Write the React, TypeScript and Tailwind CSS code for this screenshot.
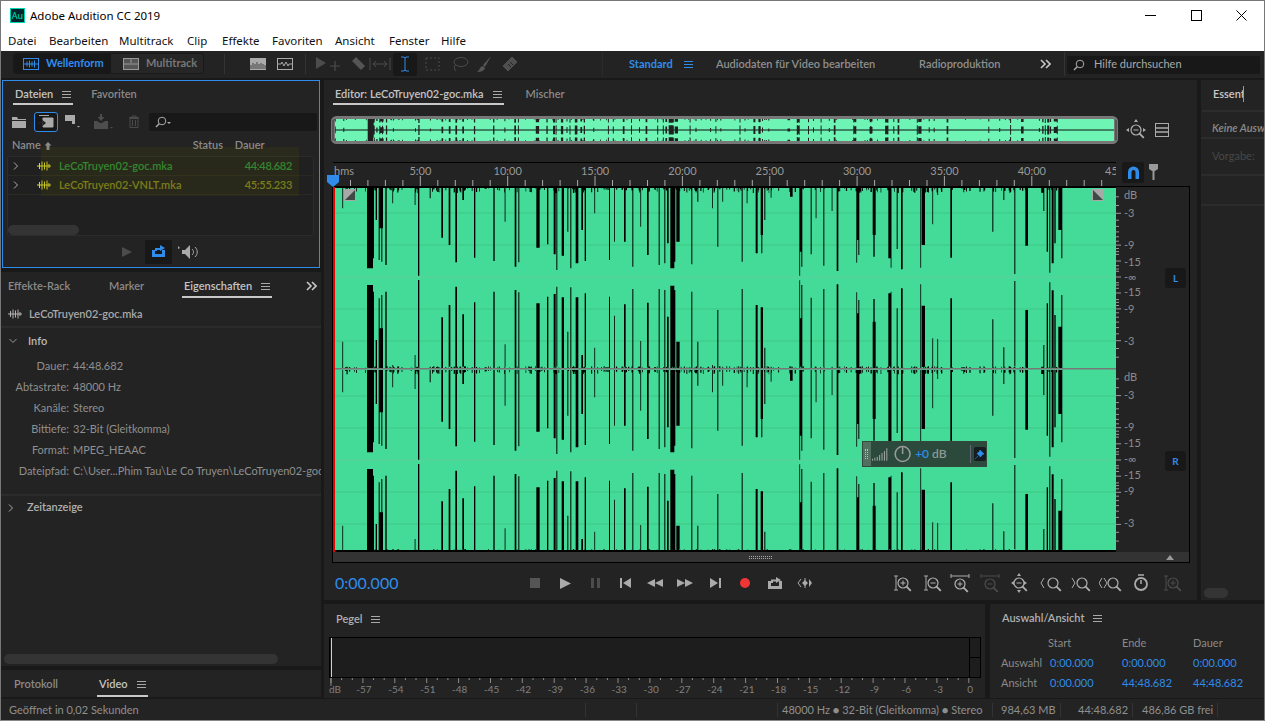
import React from "react";

type S = [number, number, number, number?];
const A: S[] = [[0,5,160,390],[28,2,70,470],[102,18,250,300],[118,5,220,320],[128,4,105,465],[137,3,225,340],[140,10,130,430],[145,3,230,330],[157,4,240,320],[178,2,55,540],[245,2,60,510],[255,4,272,285],[290,3,40,545],[325,5,158,397],[347,5,180,360],[367,5,232,305],[388,5,45,388],[423,4,218,352],[481,4,228,320],[515,2,110,478],[545,5,245,315],[556,3,232,322],[610,10,188,355],[642,4,178,335],[662,6,208,327],[670,3,255,305],[686,7,212,337],[703,3,140,440],[712,3,250,307],[728,8,235,337],[745,5,135,510],[755,4,228,325],[784,2,85,488],[828,3,225,335],[843,2,170,392],[873,5,170,358],[898,3,245,312],[922,2,125,468],[942,5,210,353],[977,3,240,312],[994,3,235,315],[1002,5,175,395],[1012,12,250,302],[1022,5,230,315],[1030,10,170,470],[1075,3,238,320],[1093,3,50,470],[1153,3,185,375],[1137,2,70,540]];
const B: S[] = [[7,2,50,545],[65,3,230,312],[80,2,55,545],[107,6,205,360],[122,7,150,367],[124,3,205,400],[133,3,105,488],[152,2,38,545],[210,8,35,545],[238,8,200,400],[238,2,272,286],[244,3,245,300],[272,3,208,338],[287,2,100,545],[310,3,242,312],[335,2,78,545],[350,5,258,298],[410,6,165,385],[409,2,233,322],[415,3,210,345],[458,9,150,410],[460,4,215,342],[505,7,220,325],[512,2,248,320],[530,3,192,370],[543,5,253,310],[601,2,248,298],[605,10,180,362],[637,2,118,460],[652,2,30,462],[691,5,218,340],[817,3,140,403],[850,3,45,487],[883,3,267,288],[916,8,182,375],[970,3,78,480],[980,4,200,355],[988,3,263,292],[995,6,235,316],[1003,4,175,390],[1015,10,135,425],[1024,3,220,330]];
const spikes: { x: number; w: number; t: number; b: number }[] = [
  ...A.map(([X, W, T, Bt]) => ({ x: X / 3, w: W / 3, t: T / 3 - 2, b: (Bt ?? 540) / 3 - 2 })),
  ...B.map(([X, W, T, Bt]) => ({ x: (X + 1161) / 3, w: W / 3, t: T / 3 - 2, b: (Bt ?? 540) / 3 - 2 })),
];
const rnd = (i: number) => {
  const v = Math.sin(i * 12.9898) * 43758.5453;
  return v - Math.floor(v);
};
let wave = "";
for (const s of spikes) {
  const w = Math.max(s.w, 0.8).toFixed(2);
  const x = s.x.toFixed(2);
  const rect = (y0: number, y1: number) => `M${x} ${y0.toFixed(1)}h${w}V${y1.toFixed(1)}h-${w}z`;
  wave += rect(0, s.t) + rect(s.b, 181) + rect(183, 183 + s.t + 1) + rect(183 + s.b + 1, 365);
}
for (let i = 0; i < 250; i++) {
  const x = rnd(i) * 729;
  const h = 1 + rnd(i + 500) * 5;
  const h2 = 1 + rnd(i + 900) * 5;
  const w = 0.5 + rnd(i + 200) * 0.8;
  wave += `M${x.toFixed(1)} 0h${w.toFixed(1)}v${h.toFixed(1)}h-${w.toFixed(1)}z`;
  wave += `M${x.toFixed(1)} 181h${w.toFixed(1)}v-${(h2 * 0.3).toFixed(1)}h-${w.toFixed(1)}z`;
  wave += `M${x.toFixed(1)} 183h${w.toFixed(1)}v${(h * 0.7).toFixed(1)}h-${w.toFixed(1)}z`;
  wave += `M${x.toFixed(1)} 365h${w.toFixed(1)}v-${(h2 * 0.5).toFixed(1)}h-${w.toFixed(1)}z`;
}
let over = "";
for (const s of spikes) {
  const sc = 777 / 783;
  const x = (s.x * sc + 3).toFixed(1);
  const w = Math.max(s.w * sc, 1).toFixed(1);
  const d = Math.max(s.t, 181 - s.b) / 90;
  if (s.w >= 5) over += `M${x} 3h${w}v22h-${w}z`;
  else {
    const h = 1 + d * 4;
    over += `M${x} 3h${w}v${(1 + d * 3).toFixed(1)}h-${w}z`;
    over += `M${x} 25h${w}v-${(1 + d * 3).toFixed(1)}h-${w}z`;
    over += `M${x} ${(14 - h).toFixed(1)}h${w}v${(h * 2).toFixed(1)}h-${w}z`;
  }
}
for (let i = 0; i < 70; i++) {
  const x = 3 + rnd(i + 40) * 723;
  over += `M${x.toFixed(1)} 3h0.8v${(0.5 + rnd(i)).toFixed(1)}h-0.8z`;
  over += `M${x.toFixed(1)} 25h0.8v-${(0.5 + rnd(i)).toFixed(1)}h-0.8z`;
}

const Burger = ({ c = "#a8a8a8" }: { c?: string }) => (
  <svg width="9" height="9" viewBox="0 0 9 9" className="shrink-0">
    <path d="M0 1.5h9M0 4.5h9M0 7.5h9" stroke={c} strokeWidth="1" />
  </svg>
);
const Wf = ({ c, w = 14 }: { c: string; w?: number }) => (
  <svg width={w} height="10" viewBox="0 0 14 10" className="shrink-0">
    <path d="M0 5h14M2.5 2v6M5 0.5v9M7.5 1.5v7M10 0.5v9M12 3v4" stroke={c} strokeWidth="1" />
  </svg>
);
const Chev = () => (
  <svg width="6" height="8" viewBox="0 0 6 8" className="shrink-0">
    <path d="M1 0.5L4.5 4L1 7.5" fill="none" stroke="#aaa" strokeWidth="1" />
  </svg>
);
const Tab = ({ label, active, menu, tall }: { label: string; active?: boolean; menu?: boolean; tall?: boolean }) => (
  <div className={`flex items-center h-full gap-[9px] border-b-[2px] px-[2px] font-semibold ${tall ? "pt-[5px]" : "pt-[4px]"} ${active ? "border-[#c8c8c8] text-[#c4c4c4]" : "border-transparent text-[#8a8a8a]"}`}>
    <span>{label}</span>
    {menu && <Burger />}
  </div>
);
const I = ({ w = 24, h = 20, children }: { w?: number; h?: number; children: React.ReactNode }) => (
  <svg width={w} height={h} viewBox={`0 0 ${w} ${h}`} className="shrink-0">
    {children}
  </svg>
);
const Mag = ({ c = "#b0b0b0", x = 14, y = 10, sign = "" }: { c?: string; x?: number; y?: number; sign?: string }) => (
  <g fill="none" stroke={c} strokeWidth="1.2">
    <circle cx={x} cy={y} r="5" />
    <path d={`M${x + 3.6} ${y + 3.6}l4.2 4.2`} strokeWidth="1.8" />
    {sign === "+" && <path d={`M${x - 2.5} ${y}h5M${x} ${y - 2.5}v5`} strokeWidth="1" />}
    {sign === "-" && <path d={`M${x - 2.5} ${y}h5`} strokeWidth="1" />}
  </g>
);
const Slot = ({ children }: { children: React.ReactNode }) => (
  <div className="w-[30px] h-full flex items-center justify-center shrink-0">{children}</div>
);

const rows = [
  ["Dauer:", "44:48.682"],
  ["Abtastrate:", "48000 Hz"],
  ["Kanäle:", "Stereo"],
  ["Bittiefe:", "32-Bit (Gleitkomma)"],
  ["Format:", "MPEG_HEAAC"],
  ["Dateipfad:", "C:\\User...Phim Tau\\Le Co Truyen\\LeCoTruyen02-goc.mka"],
];
const menu: [string, number][] = [["Datei", 41], ["Bearbeiten", 70], ["Multitrack", 68], ["Clip", 35], ["Effekte", 50], ["Favoriten", 63], ["Ansicht", 54], ["Fenster", 52], ["Hilfe", 40]];
const minutes = ["5:00", "10:00", "15:00", "20:00", "25:00", "30:00", "35:00", "40:00", "45:00"];
const meter = ["-57", "-54", "-51", "-48", "-45", "-42", "-39", "-36", "-33", "-30", "-27", "-24", "-21", "-18", "-15", "-12", "-9", "-6", "-3", "0"];

const dbY = (db: number, c: number, a: number, s: number) => c - s * a * Math.pow(10, db / 20);
const gutterLabels: [string, number][] = [
  ["dB", 8], ["-3", 26], ["-9", 58], ["-15", 75], ["-∞", 90], ["-15", 105], ["-9", 122], ["-3", 154],
  ["dB", 190], ["-3", 208], ["-9", 240], ["-15", 256], ["-∞", 272], ["-15", 288], ["-9", 304], ["-3", 336],
];
let gutterTicks = "";
for (const [c, a] of [[90, 90], [273, 91]]) {
  for (let db = -1; db >= -24; db -= db > -12 ? 1 : 3) {
    const major = db === -3 || db === -9 || db === -15;
    for (const s of [1, -1]) {
      gutterTicks += `M0 ${dbY(db, c, a, s).toFixed(1)}h${major ? 5 : 3}`;
    }
  }
  gutterTicks += `M0 ${c}h5`;
}
let rulerTicks = "";
for (let i = 1; i < 45; i++) {
  rulerTicks += `M${(i * 17.47).toFixed(1)} ${i % 5 === 0 ? 14 : 18}V24`;
}
let meterTicks = "M1 0v8";
for (let i = 0; i < 61; i++) {
  meterTicks += `M${(1 + i * 10.63).toFixed(1)} 0v${i % 3 === 0 ? 5 : 2}`;
}

export default function App() {
  return (
    <div className="w-[1265px] h-[721px] flex flex-col overflow-hidden bg-[#191919] border border-[#777] border-b-[#888] text-[11px] text-[#a0a0a0] [font-family:Lato,sans-serif] relative">
      {/* title bar */}
      <div className="h-[28px] bg-white flex items-center shrink-0 pl-[9px] text-black text-[11.5px] [font-family:'Noto_Sans',sans-serif]">
        <div className="w-[15px] h-[15px] bg-[#00262b] border border-[#00d8b4] flex items-center justify-center text-[#00e0bb] text-[9px] leading-none">Au</div>
        <span className="ml-[5px] pt-[1px]">Adobe Audition CC 2019</span>
        <div className="ml-auto flex h-full">
          <div className="w-[46px] flex items-center justify-center"><svg width="11" height="11"><path d="M0 5.5h11" stroke="#000" /></svg></div>
          <div className="w-[46px] flex items-center justify-center"><svg width="11" height="11"><rect x="0.5" y="0.5" width="10" height="10" fill="none" stroke="#000" /></svg></div>
          <div className="w-[45px] flex items-center justify-center"><svg width="11" height="11"><path d="M0.5 0.5l10 10M10.5 0.5l-10 10" stroke="#000" /></svg></div>
        </div>
      </div>
      {/* menu */}
      <div className="h-[22px] bg-white flex items-center shrink-0 pl-[7px] pt-[2px] text-[#111] text-[11.5px] [font-family:'Noto_Sans',sans-serif]">
        {menu.map(([m, w]) => (
          <span key={m} style={{ width: w }} className="shrink-0">{m}</span>
        ))}
      </div>
      {/* toolbar */}
      <div className="h-[27px] pb-[1px] bg-[#232323] shrink-0 flex items-center pl-[12px] font-semibold whitespace-nowrap">
        <div className="flex h-[21px] w-[191px] rounded-[3px] border border-[#191919] bg-[#262626] mt-[-1px]">
          <div className="w-[97px] bg-[#181818] rounded-l-[3px] flex items-center pl-[9px] gap-[7px] text-[#2f8ceb] font-bold">
            <svg width="16" height="12" viewBox="0 0 16 12"><rect x="0.5" y="0.5" width="15" height="11" fill="none" stroke="#2f8ceb" /><path d="M1 6h14M4 3.5v5M6.5 2.5v7M9 3.5v5M11.5 2.5v7" stroke="#2f8ceb" /></svg>
            <span>Wellenform</span>
          </div>
          <div className="flex-1 flex items-center pl-[12px] gap-[7px] text-[#777] font-bold">
            <svg width="16" height="12" viewBox="0 0 16 12"><rect x="0.5" y="0.5" width="15" height="11" fill="#555" stroke="#999" /><path d="M1 6h14M8 1v4" stroke="#999" /></svg>
            <span>Multitrack</span>
          </div>
        </div>
        <div className="w-px h-[20px] bg-[#333] ml-[20px]" />
        <div className="ml-[25px] flex gap-[11px]">
          <svg width="16" height="12" viewBox="0 0 16 12"><rect width="16" height="12" fill="#aaa" /><path d="M1 11V7M3 11V5M5 11V6M7 11V4M9 11V6M11 11V5M13 11V6M15 11V7" stroke="#444" /></svg>
          <svg width="16" height="12" viewBox="0 0 16 12"><rect x="0.5" y="0.5" width="15" height="11" fill="none" stroke="#aaa" /><path d="M1 6h3l1-2 2 4 2-4 2 4 1-2h3" fill="none" stroke="#aaa" /></svg>
        </div>
        <div className="w-px h-[20px] bg-[#333] ml-[12px]" />
        <div className="ml-[9px] flex items-center">
          <svg width="26" height="18" viewBox="0 0 26 18"><path d="M1 2l10 6-10 6z" fill="#4c4c4c" /><path d="M15 11h10M20 6v10" stroke="#4c4c4c" strokeWidth="1.2" /></svg>
          <svg width="16" height="18" viewBox="0 0 16 18" className="ml-[10px]"><path d="M1 6l4-4 9 9-4 4z" fill="#555" /></svg>
          <svg width="22" height="14" viewBox="0 0 22 14" className="ml-[2px]"><path d="M1 1v12M21 1v12M4 7h14M4 7l3-3M4 7l3 3M18 7l-3-3M18 7l-3 3" stroke="#4c4c4c" fill="none" /></svg>
          <div className="ml-[2px] w-[24px] h-[23px] bg-[#181818] rounded-[3px] flex items-center justify-center">
            <svg width="10" height="16" viewBox="0 0 10 16"><path d="M1 1h3l1 1 1-1h3M5 2v12M1 15h3l1-1 1 1h3" fill="none" stroke="#2f8ceb" /></svg>
          </div>
          <svg width="16" height="14" viewBox="0 0 16 14" className="ml-[8px]"><rect x="1" y="1" width="13" height="12" fill="none" stroke="#4c4c4c" strokeDasharray="2 2" /></svg>
          <svg width="18" height="16" viewBox="0 0 18 16" className="ml-[10px]"><ellipse cx="10" cy="6" rx="7" ry="4.5" fill="none" stroke="#4c4c4c" /><path d="M4 9c-1 2-1 4 1 6" fill="none" stroke="#4c4c4c" /></svg>
          <svg width="16" height="18" viewBox="0 0 16 18" className="ml-[7px]"><path d="M15 1L7 10l2 2zM7 11c-3 0-3 4-6 6 4 0 7-1 8-4z" fill="#555" /></svg>
          <svg width="18" height="18" viewBox="0 0 18 18" className="ml-[9px]"><path d="M2 11l9-9 5 5-9 9z" fill="#4f4f4f" stroke="#4f4f4f" strokeLinejoin="round" /><path d="M7 9l3 3M9 7l3 3" stroke="#232323" /></svg>
        </div>
        <div className="w-px h-[24px] bg-[#2b2b2b] ml-[83px]" />
        <div className="ml-[26px] w-[87px] flex items-center gap-[11px] text-[#2f8ceb] font-bold">
          <span>Standard</span>
          <Burger c="#2f8ceb" />
        </div>
        <span className="w-[203px] text-[#8f8f8f]">Audiodaten für Video bearbeiten</span>
        <span className="w-[121px] text-[#8f8f8f]">Radioproduktion</span>
        <svg width="11" height="10" viewBox="0 0 11 10"><path d="M1 1l4 4-4 4M6 1l4 4-4 4" fill="none" stroke="#c8c8c8" strokeWidth="1.6" /></svg>
        <div className="w-px h-[24px] bg-[#333] ml-[13px]" />
        <div className="ml-[2px] w-[193px] h-[18px] bg-[#181818] rounded-[2px] flex items-center pl-[6px] gap-[9px] font-normal text-[#a8a8a8] mt-[1px]">
          <svg width="12" height="12" viewBox="0 0 12 12"><circle cx="7" cy="5" r="3.8" fill="none" stroke="#aaa" /><path d="M4.2 7.8L1 11" stroke="#aaa" strokeWidth="1.4" /></svg>
          <span>Hilfe durchsuchen</span>
        </div>
      </div>
      {/* main */}
      <div className="flex mt-[2px] h-[617px] shrink-0">
        {/* left */}
        <div className="w-[320px] shrink-0 flex flex-col gap-[4px]">
          {/* Dateien */}
          <div className="relative ml-[1px] w-[318px] h-[188px] shrink-0 bg-[#232323] border border-[#2f8ceb] flex flex-col">
            <div className="h-[24px] shrink-0 flex pl-[10px] gap-[16px]">
              <Tab label="Dateien" active menu />
              <Tab label="Favoriten" />
            </div>
            <div className="h-[19px] mt-[7px] shrink-0 flex items-center pl-[9px]">
              <svg width="15" height="12" viewBox="0 0 15 12"><path d="M0 1h5l1 2h8v1H0zM0 5h14v7H0z" fill="#aaa" /></svg>
              <div className="ml-[7px] w-[24px] h-[20px] rounded-[3px] border border-[#2f8ceb] bg-[#181818] flex items-center justify-center">
                <svg width="16" height="13" viewBox="0 0 16 13"><path d="M1 0.5h10M5 3h10v9H5z" fill="#aaa" stroke="#aaa" strokeWidth="1" /><path d="M0 8h6M4 5.5L7 8l-3 2.5" fill="none" stroke="#222" strokeWidth="1.4" /></svg>
              </div>
              <svg width="16" height="13" viewBox="0 0 16 13" className="ml-[7px]"><path d="M0 0h10v9H7v-3H0z" fill="#aaa" /><path d="M12 11h3l-1.5 1.5z" fill="#aaa" /></svg>
              <svg width="20" height="16" viewBox="0 0 20 16" className="ml-[13px]"><path d="M6 0h2v3h2.500L7 7 3.500 3H6zM0 7h3l3 2h2l3-2h3v8H0z" fill="#4d4d4d" /><path d="M16 13h3l-1.500 1.500z" fill="#4d4d4d" /></svg>
              <svg width="12" height="13" viewBox="0 0 12 13" className="ml-[14px]"><path d="M1 2.500h10M4 2.500V1h4v1.500M2 3.500h8v9H2zM4.500 5v6M7.500 5v6" fill="none" stroke="#4a4a4a" /></svg>
              <div className="ml-[9px] w-[168px] h-[18px] bg-[#181818] rounded-[2px] flex items-center pl-[6px]">
                <svg width="17" height="12" viewBox="0 0 17 12"><circle cx="7" cy="5" r="3.800" fill="none" stroke="#aaa" /><path d="M4.200 7.800L1 11" stroke="#aaa" strokeWidth="1.400" /><path d="M12 6h4l-2 2z" fill="#aaa" /></svg>
              </div>
            </div>
            <div className="h-[25px] shrink-0 relative flex items-center pt-[4px] text-[#8c8c8c] font-semibold">
              <span className="ml-[9px]">Name</span>
              <svg width="8" height="8" viewBox="0 0 8 8" className="ml-[3px]"><path d="M4 0l3.500 3.500H5.500V8h-3V3.500H.5z" fill="#8c8c8c" /></svg>
              <span className="ml-[141px] w-[42px]">Status</span>
              <span>Dauer</span>
            </div>
            <div className="relative h-[80px] shrink-0 mx-[4px] w-[307px] rounded-[2px] border border-[#2c2c2c] bg-[#202020] font-semibold">
              {[["LeCoTruyen02-goc.mka", "44:48.682", "text-[#2c8f38]"], ["LeCoTruyen02-VNLT.mka", "45:55.233", "text-[#80831f]"]].map(([n, d, c]) => (
                <div key={n} className="h-[19px] flex items-center border-b border-[#2a2a22] pl-[5px]">
                  <Chev />
                  <div className="ml-[18px]"><Wf c="#d8d82c" /></div>
                  <span className={`ml-[8px] ${c}`}>{n}</span>
                  <span className={`ml-auto mr-[21px] tracking-[-0.3px] ${c}`}>{d}</span>
                </div>
              ))}
              <div className="absolute left-[0px] bottom-[0px] w-[71px] h-[10px] bg-[#343434] rounded-[5px]" />
            </div>
            <div className="flex-1 flex items-center pl-[118px]">
              <svg width="12" height="12" viewBox="0 0 12 12"><path d="M1 1l10 5-10 5z" fill="#4c4c4c" /></svg>
              <div className="ml-[12px] w-[27px] h-[24px] bg-[#181818] rounded-[2px] flex items-center justify-center">
                <svg width="15" height="13" viewBox="0 0 15 13"><path d="M1 5v7h13V5h-3v4H4V5z" fill="#2f8ceb" /><path d="M4 6V3h5V0l5 3-5 3V5H6v1z" fill="#2f8ceb" /></svg>
              </div>
              <svg width="22" height="16" viewBox="0 0 22 16" className="ml-[6px]"><path d="M0 2l2 2-2 1zM4 6h3l5-5v14l-5-5H4z" fill="#aaa" /><path d="M14 5c2 2 2 4 0 6M17 3c3 3 3 7 0 10" fill="none" stroke="#aaa" /></svg>
            </div>
            <div className="absolute left-[38px] top-[66px] w-[258px] h-[49px] bg-[#5c5c00]/15 pointer-events-none" />
          </div>
          {/* properties */}
          <div className="h-[394px] shrink-0 bg-[#232323] flex flex-col overflow-hidden">
            <div className="h-[26px] shrink-0 flex items-stretch pl-[7px] relative">
              <span className="flex items-center pt-[2px] font-semibold text-[#8a8a8a] w-[101px]">Effekte-Rack</span>
              <span className="flex items-center pt-[2px] font-semibold text-[#8a8a8a] w-[73px]">Marker</span>
              <Tab label="Eigenschaften" active menu />
              <svg width="11" height="10" viewBox="0 0 11 10" className="ml-[34px] self-center mt-[1px]"><path d="M1 1l4 4-4 4M6 1l4 4-4 4" fill="none" stroke="#c8c8c8" strokeWidth="1.600" /></svg>
            </div>
            <div className="h-[30px] shrink-0 flex items-center pl-[7px] pt-[4px] border-b-[2px] border-[#2b2b2b] font-semibold text-[#a8a8a8] gap-[7px]">
              <Wf c="#b4b4b4" />
              <span>LeCoTruyen02-goc.mka</span>
            </div>
            <div className="h-[28px] shrink-0 flex items-center pl-[8px] pb-[2px] font-semibold text-[#b8b8b8]">
              <svg width="8" height="6" viewBox="0 0 8 6"><path d="M.5 1l3.500 3.500L7.500 1" fill="none" stroke="#999" /></svg>
              <span className="ml-[11px]">Info</span>
            </div>
            <div className="flex flex-col">
              {rows.map(([k, v]) => (
                <div key={k} className="h-[21px] flex items-center whitespace-nowrap">
                  <span className="w-[68px] text-right text-[#8f8f8f] shrink-0">{k}</span>
                  <span className="ml-[4px] text-[#8f8f8f]">{v}</span>
                </div>
              ))}
            </div>
            <div className="mt-[12px] h-[25px] shrink-0 flex items-center pl-[7px] border-t-[2px] border-[#2b2b2b] font-semibold text-[#b0b0b0]">
              <Chev />
              <span className="ml-[13px]">Zeitanzeige</span>
            </div>
            <div className="flex-1" />
            <div className="h-[10px] mb-[2px] mx-[3px] w-[274px] rounded-[5px] bg-[#343434]" />
          </div>
          {/* Protokoll */}
          <div className="flex-1 bg-[#232323] flex pl-[13px]">
            <span className="flex items-center pt-[1px] font-semibold text-[#8a8a8a] w-[83px]">Protokoll</span>
            <Tab label="Video" active menu />
          </div>
        </div>
        {/* right area */}
        <div className="ml-[3px] flex-1 flex flex-col gap-[4px]">
          <div className="flex gap-[4px] h-[520px] shrink-0">
            {/* editor */}
            <div className="w-[873px] shrink-0 bg-[#232323] flex flex-col">
              <div className="h-[25px] shrink-0 flex pl-[9px] gap-[20px]">
                <Tab label="Editor: LeCoTruyen02-goc.mka" active menu tall />
                <Tab label="Mischer" tall />
              </div>
              <div className="mt-[11px] h-[28px] shrink-0 flex items-center pl-[7px]">
                <svg width="787" height="28" viewBox="0 0 787 28" className="shrink-0">
                  <rect x="1.500" y="1.500" width="784" height="25" rx="4" fill="#6ef5b6" stroke="#777" strokeWidth="3" />
                  <path d="M3 14h781" stroke="#111" strokeWidth="1" />
                  <path d={over} fill="#202020" />
                  <rect x="0.500" y="3" width="3" height="22" rx="1.500" fill="#555" stroke="#777" />
                  <rect x="783.500" y="3" width="3" height="22" rx="1.500" fill="#555" stroke="#777" />
                </svg>
                <svg width="22" height="22" viewBox="0 0 22 22" className="ml-[7px]">
                  <Mag x={11} y={11} sign="-" />
                  <path d="M11 0l-2 3h4zM1 11l3-2v4zM21 11l-3-2v4z" fill="#aaa" />
                </svg>
                <svg width="14" height="14" viewBox="0 0 14 14" className="ml-[8px]"><rect x="0.500" y="0.500" width="13" height="13" fill="none" stroke="#aaa" /><path d="M1 5h12M1 9h12" stroke="#aaa" strokeWidth="1.500" /></svg>
              </div>
              <div className="relative flex flex-col flex-1">
                <div className="mt-[18px] h-[24px] shrink-0 flex pl-[9px]">
                  <div className="w-[783px] h-[24px] shrink-0 border-t border-black overflow-hidden">
                    <svg width="783" height="23" viewBox="0 1 783 23" className="block">
                      <path d={rulerTicks} stroke="#aaa" strokeWidth="1" />
                      <text x="1" y="13" fontSize="11" fill="#999">hms</text>
                      {minutes.map((m, i) => (
                        <text key={m} x={(i + 1) * 87.35} y="13" fontSize="11" fill="#999" textAnchor="middle">{m}</text>
                      ))}
                    </svg>
                  </div>
                  <div className="ml-[6px] w-[22px] h-[21px] bg-[#181818] rounded-[2px] flex items-center justify-center">
                    <svg width="13" height="13" viewBox="0 0 13 13"><path d="M1 13V6a5.500 5.500 0 0 1 11 0v7H8.500V6a2 2 0 0 0-4 0v7z" fill="#2f8ceb" /></svg>
                  </div>
                  <svg width="9" height="16" viewBox="0 0 9 16" className="ml-[5px] mt-[2px]"><path d="M0 0h9v5L6 7H5.500v9h-2V7H3L0 5z" fill="#999" /></svg>
                </div>
                <div className="ml-[8px] w-[858px] h-[377px] shrink-0 border-l border-t border-r border-b border-black flex flex-col">
                  <div className="flex h-[365px] shrink-0">
                    <div className="relative w-[783px] shrink-0 h-[365px] bg-[#44da98]">
                      <svg width="783" height="365" viewBox="0 0 783 365" className="block">
                        <path d="M0 26h783M0 58h783M0 122h783M0 154h783M0 209h783M0 241h783M0 305h783M0 337h783" stroke="#3fc885" strokeWidth="1" />
                        <path d="M0 90h783M0 273h783" stroke="#5fcf9a" strokeWidth="1" />
                        <path d={wave} fill="#000" />
                        <rect x="0" y="181" width="783" height="1.500" fill="#777" />
                        <rect x="0" y="363" width="783" height="2" fill="#000" />
                        <rect x="0" y="0" width="783" height="1" fill="#000" />
                        <rect x="0" y="0" width="2" height="365" fill="#ee0000" />
                      </svg>
                      <div className="absolute left-[11px] top-[2px] w-[12px] h-[12px] bg-[#a8a8a8]">
                        <svg width="12" height="12" viewBox="0 0 12 12" className="block"><path d="M11 1L1 11h10z" fill="#3f4a46" /></svg>
                      </div>
                      <div className="absolute left-[759px] top-[2px] w-[12px] h-[12px] bg-[#a8a8a8]">
                        <svg width="12" height="12" viewBox="0 0 12 12" className="block"><path d="M1 1l10 10H1z" fill="#3f4a46" /></svg>
                      </div>
                      {/* HUD */}
                      <div className="absolute left-[529px] top-[254px] w-[125px] h-[26px] bg-[#2b4a3c] flex items-center border border-[#33473e]">
                        <div className="w-[8px] h-full bg-[#51705f] flex items-center justify-center">
                          <div className="w-[3px] h-[10px] border-x border-dotted border-[#c0c0c0]" />
                        </div>
                        <svg width="17" height="14" viewBox="0 0 17 14" className="ml-[1px]">
                          <path d="M.5 14v-2M3 14v-3M5.500 14v-4M8 14V8M10.500 14V6M13 14V4M15.500 14V1" stroke="#aaa" strokeWidth="1" />
                        </svg>
                        <svg width="18" height="18" viewBox="0 0 18 18" className="ml-[6px]"><circle cx="9" cy="9" r="7.800" fill="none" stroke="#9a9a9a" strokeWidth="1.600" /><path d="M9 2v7" stroke="#9a9a9a" strokeWidth="1.600" /></svg>
                        <span className="ml-[4px] text-[#2f8ceb] font-semibold text-[12px]">+0</span>
                        <span className="ml-[3px] text-[#8f9a94] font-semibold text-[12px]">dB</span>
                        <div className="ml-[23px] w-px h-[18px] bg-[#667]" />
                        <div className="ml-[3px] w-[13px] h-[14px] bg-[#151d1f] rounded-[2px] flex items-center justify-center">
                          <svg width="9" height="9" viewBox="0 0 9 9"><path d="M5 0l4 4-1.500.5L5.500 7 2 3.500l2.500-2zM3 6L0 9" fill="#2f8ceb" stroke="#2f8ceb" strokeWidth=".6" /></svg>
                        </div>
                      </div>
                    </div>
                    <div className="relative flex-1 h-[365px]">
                      <svg width="73" height="365" viewBox="0 0 73 365" className="block">
                        <path d={gutterTicks} stroke="#999" strokeWidth="1" />
                        {gutterLabels.map(([l, y], i) => (
                          <text key={i} x="8" y={y + 4} fontSize="11" fill="#8c8c8c">{l}</text>
                        ))}
                      </svg>
                      <div className="absolute left-[49px] top-[81px] w-[21px] h-[20px] bg-[#181818] rounded-[3px] text-[#2f8ceb] text-[10px] font-bold flex items-center justify-center">L</div>
                      <div className="absolute left-[49px] top-[264px] w-[21px] h-[20px] bg-[#181818] rounded-[3px] text-[#2f8ceb] text-[10px] font-bold flex items-center justify-center">R</div>
                    </div>
                  </div>
                  <div className="flex-1 bg-[#333] flex items-center relative">
                    <div className="ml-[416px] w-[23px] h-[3px] border-y border-dotted border-[#aaa]" />
                    <svg width="8" height="5" viewBox="0 0 8 5" className="ml-[394px]"><path d="M4 0l4 5H0z" fill="#999" /></svg>
                  </div>
                </div>
                {/* playhead */}
                <svg width="12" height="12" viewBox="0 0 12 12" className="absolute left-[3px] top-[31px]"><path d="M0 0h12v7l-6 5-6-5z" fill="#2f8ceb" /></svg>
                {/* transport */}
                <div className="flex-1 flex items-center pl-[11px] pt-[3px]">
                  <span className="w-[185px] text-[#2f8ceb] text-[16px] leading-none">0:00.000</span>
                  <Slot><div className="w-[10px] h-[10px] bg-[#555]" /></Slot>
                  <Slot><svg width="11" height="11" viewBox="0 0 11 11"><path d="M0 0l11 5.500L0 11z" fill="#aaa" /></svg></Slot>
                  <Slot><svg width="9" height="10" viewBox="0 0 9 10"><path d="M0 0h3v10H0zM6 0h3v10H6z" fill="#4c4c4c" /></svg></Slot>
                  <Slot><svg width="11" height="10" viewBox="0 0 11 10"><path d="M0 0h2v10H0zM11 0v10L3 5z" fill="#aaa" /></svg></Slot>
                  <Slot><svg width="16" height="8" viewBox="0 0 16 8"><path d="M8 0v8L0 4zM16 0v8L8 4z" fill="#aaa" /></svg></Slot>
                  <Slot><svg width="16" height="8" viewBox="0 0 16 8"><path d="M0 0v8l8-4zM8 0v8l8-4z" fill="#aaa" /></svg></Slot>
                  <Slot><svg width="11" height="10" viewBox="0 0 11 10"><path d="M9 0h2v10H9zM0 0v10l8-5z" fill="#aaa" /></svg></Slot>
                  <Slot><div className="w-[10px] h-[10px] rounded-full bg-[#f03535]" /></Slot>
                  <Slot><svg width="14" height="12" viewBox="0 0 14 12"><path d="M0 4v8h14V4h-3v5H3V4z" fill="#aaa" /><path d="M3 6V2.500h5V0l5 3-5 3V4.500H5V6z" fill="#aaa" /></svg></Slot>
                  <Slot><svg width="16" height="10" viewBox="0 0 16 10"><path d="M4 1L1 5l3 4M8 0v10" fill="none" stroke="#aaa" /><path d="M5 5l3-3v6zM11 5L8 2v6zM12 1l3 4-3 4V1z" fill="#aaa" /></svg></Slot>
                  <div className="w-[66px] shrink-0" />
                  <Slot><I><path d="M5 3h4M5 17h4M7 3v14" stroke="#aaa" /><Mag sign="+" /></I></Slot>
                  <Slot><I><path d="M5 3h4M5 17h4M7 3v14" stroke="#aaa" /><Mag sign="-" /></I></Slot>
                  <Slot><I><path d="M2 3h18M2 1v4M20 1v4" stroke="#aaa" /><Mag x={11} y={11} sign="+" /></I></Slot>
                  <Slot><I><path d="M2 3h18M2 1v4M20 1v4" stroke="#4c4c4c" /><Mag x={11} y={11} sign="-" c="#4c4c4c" /></I></Slot>
                  <Slot><I><path d="M10 0l-2 3h4zM2 10l3-2v4zM18 10l-3-2v4zM10 20l-2-3h4z" fill="#aaa" /><Mag x={10} y={10} sign="-" /></I></Slot>
                  <Slot><I><path d="M5 5L2 10l3 5" fill="none" stroke="#aaa" /><Mag x={14} y={10} /></I></Slot>
                  <Slot><I><path d="M3 5l3 5-3 5" fill="none" stroke="#aaa" /><Mag x={13} y={10} /></I></Slot>
                  <Slot><I><path d="M3 5L0 10l3 5M5 5l3 5-3 5" fill="none" stroke="#aaa" /><Mag x={14} y={10} /></I></Slot>
                  <Slot><I><circle cx="12" cy="11" r="6" fill="none" stroke="#aaa" strokeWidth="1.800" /><path d="M12 11V7M9 2h6" stroke="#aaa" strokeWidth="1.500" /></I></Slot>
                  <Slot><I><path d="M5 3h4M5 17h4M7 3v14" stroke="#4c4c4c" /><Mag sign="+" c="#4c4c4c" /></I></Slot>
                </div>
              </div>
            </div>
            {/* right panel */}
            <div className="flex-1 bg-[#232323] flex flex-col overflow-hidden whitespace-nowrap">
              <div className="h-[32px] shrink-0 flex items-center pl-[11px] pb-[2px] font-semibold text-[#c8c8c8] border-b-[2px] border-[#2c2c2c] mx-[1px]"><span className="w-[31px] overflow-hidden border-r border-[#999]">Essent</span></div>
              <div className="h-[27px] shrink-0 flex items-center pl-[11px] pt-[8px] italic font-semibold text-[#8a8a8a] border-b-[2px] border-[#2c2c2c]">Keine Auswahl</div>
              <div className="h-[37px] shrink-0 flex items-center pl-[11px] text-[#484848] border-b-[2px] border-[#2c2c2c]">Vorgabe:</div>
              <div className="h-[30px] shrink-0 border-b-[2px] border-[#2c2c2c]" />
              <div className="flex-1" />
              <div className="h-[10px] w-[24px] ml-[3px] mb-[2px] rounded-[5px] bg-[#343434]" />
            </div>
          </div>
          <div className="flex gap-[5px] flex-1">
            {/* Pegel */}
            <div className="w-[661px] shrink-0 bg-[#232323] flex flex-col">
              <div className="h-[30px] shrink-0 flex items-center pl-[12px] gap-[9px] font-semibold text-[#b0b0b0]">
                <span>Pegel</span>
                <Burger />
              </div>
              <div className="ml-[5px] mt-[3px] w-[652px] h-[41px] bg-[#1d1d1d] border border-black flex shrink-0">
                <div className="w-[1px] ml-[1px] h-full bg-[#f2e400]" />
                <div className="flex-1" />
                <div className="w-[11px] border-l border-black flex flex-col"><div className="h-1/2 border-b border-black" /></div>
              </div>
              <svg width="661" height="20" viewBox="0 0 661 20" className="shrink-0">
                <g transform="translate(6 0)"><path d={meterTicks} stroke="#8a8a8a" strokeWidth="1" /></g>
                <text x="5" y="15" fontSize="10" fill="#808080">dB</text>
                {meter.map((m, i) => (
                  <text key={m} x={40 + i * 31.9} y="15" fontSize="10" fill="#808080" textAnchor="middle">{m}</text>
                ))}
              </svg>
            </div>
            {/* Auswahl */}
            <div className="flex-1 bg-[#232323] flex flex-col">
              <div className="h-[29px] shrink-0 flex items-center pl-[12px] gap-[9px] font-semibold text-[#b0b0b0]">
                <span>Auswahl/Ansicht</span>
                <Burger />
              </div>
              <div className="grid grid-cols-[49px_72px_71px_1fr] grid-rows-[20px_20px_21px] pl-[11px] items-center whitespace-nowrap">
                <span />
                <span className="text-[#8a8a8a] -ml-[2px]">Start</span>
                <span className="text-[#8a8a8a]">Ende</span>
                <span className="text-[#8a8a8a]">Dauer</span>
                <span className="text-[#8a8a8a]">Auswahl</span>
                <span className="text-[#2f8ceb]">0:00.000</span>
                <span className="text-[#2f8ceb]">0:00.000</span>
                <span className="text-[#2f8ceb]">0:00.000</span>
                <span className="text-[#8a8a8a]">Ansicht</span>
                <span className="text-[#2f8ceb]">0:00.000</span>
                <span className="text-[#2f8ceb]">44:48.682</span>
                <span className="text-[#2f8ceb]">44:48.682</span>
              </div>
            </div>
          </div>
        </div>
      </div>
      {/* status */}
      <div className="mt-[2px] flex-1 bg-[#232323] flex items-center pl-[8px] pt-[1px] text-[#8f8f8f] whitespace-nowrap">
        <span className="w-[576px]">Geöffnet in 0,02 Sekunden</span>
        <div className="w-px h-[14px] bg-[#333]" />
        <div className="w-[50px]" />
        <div className="w-px h-[14px] bg-[#333]" />
        <div className="w-[140px]" />
        <div className="w-px h-[14px] bg-[#333]" />
        <span className="ml-[4px] w-[210px]">48000 Hz ● 32-Bit (Gleitkomma) ● Stereo</span>
        <div className="w-px h-[14px] bg-[#333]" />
        <span className="ml-[8px] w-[59px]">984,63 MB</span>
        <div className="w-px h-[14px] bg-[#333]" />
        <span className="ml-[17px] w-[54px]">44:48.682</span>
        <div className="w-px h-[14px] bg-[#333]" />
        <span className="ml-[9px] w-[75px]">486,86 GB frei</span>
        <div className="w-px h-[14px] bg-[#333]" />
      </div>
    </div>
  );
}
